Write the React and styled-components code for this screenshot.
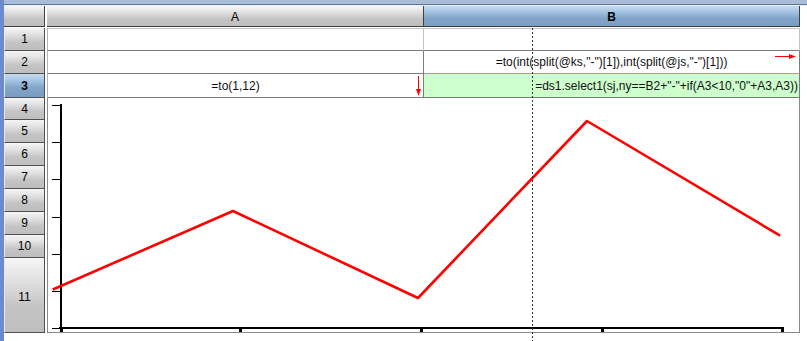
import React from "react";
import styled, { createGlobalStyle, css } from "styled-components";

const Global = createGlobalStyle`
  html, body { margin: 0; padding: 0; background: #ffffff; }
  body { font-family: "Liberation Sans", Arial, sans-serif; font-size: 12px; color: #000; }
`;

const Frame = styled.div`
  position: relative;
  display: flex;
  width: 807px;
  height: 341px;
  overflow: hidden;
  background: #ffffff;
`;

const LeftStrip = styled.div`
  width: 4px;
  flex: none;
  background: #6b8cc8;
`;

const Main = styled.div`
  flex: 1;
  display: flex;
  flex-direction: column;
`;

const TopStrip = styled.div`
  height: 6px;
  flex: none;
  background: linear-gradient(
    to bottom,
    #a9bdd9 0px,
    #a9bdd9 4px,
    #5f7499 4px,
    #5f7499 5px,
    #eef0f4 5px
  );
`;

const Sheet = styled.div`
  display: grid;
  grid-template-columns: 43px 377px 376px;
  grid-template-rows: 22px 23px 23px 24px 22px 23px 23px 23px 23px 23px 23px 75px;
`;

const headerGrey = css`
  background: linear-gradient(to bottom, #f6f6f6 0%, #dedede 35%, #c4c4c4 65%, #bebebe 100%);
`;
const headerBlue = css`
  background: linear-gradient(to bottom, #c4dcf2 0%, #a3c3e2 30%, #81a4c8 60%, #7a9dc2 100%);
`;

const Corner = styled.div`
  ${headerGrey};
  margin: 0 2px 1px 0;
  border-right: 1px solid #404040;
  border-bottom: 1px solid #404040;
  box-sizing: border-box;
`;

const ColHeader = styled.div`
  ${(p) => (p.$selected ? headerBlue : headerGrey)};
  margin-bottom: 1px;
  border-right: 1px solid #404040;
  border-bottom: 1px solid #404040;
  box-sizing: border-box;
  display: flex;
  align-items: center;
  justify-content: center;
  font-weight: ${(p) => (p.$selected ? 700 : 400)};
  padding-top: 1px;
`;

const RowHeader = styled.div`
  ${(p) => (p.$selected ? headerBlue : headerGrey)};
  margin-right: 2px;
  border-bottom: 1px solid #505050;
  border-right: 1px solid #505050;
  border-left: 1px solid #e8e8e8;
  box-sizing: border-box;
  display: flex;
  align-items: center;
  justify-content: center;
  font-weight: ${(p) => (p.$selected ? 700 : 400)};
  padding-top: ${(p) => (p.$tall ? "3px" : "0")};
`;

const Cell = styled.div`
  position: relative;
  box-sizing: border-box;
  background: ${(p) => p.$bg || "#ffffff"};
  border-right: 1px solid ${(p) => (p.$light ? "#c4c4c4" : "#7c7c7c")};
  border-bottom: 1px solid ${(p) => p.$bottom || "#7c7c7c"};
  border-top: ${(p) => (p.$first ? "1px solid #c4c4c4" : "none")};
  border-left: ${(p) => (p.$colA ? "1px solid #b4b4b4" : "none")};
  display: flex;
  align-items: center;
  justify-content: ${(p) => p.$align || "center"};
  white-space: nowrap;
  padding: 0 1px;
`;

const CellText = styled.span`
  color: #111;
`;

const ChartCell = styled.div`
  grid-column: 2 / 4;
  grid-row: 5 / 13;
  box-sizing: border-box;
  border-left: 1px solid #8a8a8a;
  border-right: 1px solid #8a8a8a;
  border-bottom: 1px solid #8a8a8a;
  background: #ffffff;
  display: flex;
`;

const Marker = styled.svg`
  position: absolute;
  ${(p) => p.$pos};
`;

const PageBreak = styled.div`
  position: absolute;
  left: 532px;
  top: 28px;
  bottom: 0;
  width: 1px;
  background: repeating-linear-gradient(to bottom, #333 0px, #333 2px, transparent 2px, transparent 4px);
  pointer-events: none;
`;

const rows = ["4", "5", "6", "7", "8", "9", "10", "11"];

const points = [
  [6, 191],
  [185, 113],
  [370, 200],
  [539, 23],
  [731, 137],
];

const yTicks = [7, 44.2, 81.3, 118.5, 155.7, 192.8, 230];
const xTicks = [13, 192, 373, 554, 734];

function Chart() {
  return (
    <svg width="750" height="234" viewBox="0 0 750 234">
      <g shapeRendering="crispEdges" stroke="#000" fill="none">
        <line x1="12.5" y1="6" x2="12.5" y2="231" strokeWidth="2" />
        <line x1="11" y1="230" x2="736" y2="230" strokeWidth="2" />
        {yTicks.map((y) => (
          <line key={y} x1="4" y1={Math.round(y) + 0.5} x2="12" y2={Math.round(y) + 0.5} strokeWidth="1.5" />
        ))}
      </g>
      <g fill="#000" shapeRendering="crispEdges">
        {xTicks.map((x) => (
          <rect key={x} x={x - 1} y="231" width="3" height="3" />
        ))}
      </g>
      <polyline
        points={points.map((p) => p.join(",")).join(" ")}
        fill="none"
        stroke="#ff0000"
        strokeWidth="2.6"
        strokeLinejoin="round"
        strokeLinecap="square"
      />
    </svg>
  );
}

export default function App() {
  return (
    <>
      <Global />
      <Frame>
        <LeftStrip />
        <Main>
          <TopStrip />
          <Sheet>
            <Corner />
            <ColHeader>A</ColHeader>
            <ColHeader $selected>B</ColHeader>

            <RowHeader>1</RowHeader>
            <Cell $first $colA $light />
            <Cell $first $light />

            <RowHeader>2</RowHeader>
            <Cell $colA />
            <Cell $bottom="#b58cc8">
              <CellText>=to(int(split(@ks,"-")[1]),int(split(@js,"-")[1]))</CellText>
              <Marker width="22" height="7" viewBox="0 0 22 7" $pos="right: 2px; top: 2px;">
                <line x1="0" y1="3.5" x2="16" y2="3.5" stroke="#ff0000" strokeWidth="1" shapeRendering="crispEdges" />
                <polygon points="14,1 21,3.5 14,6" fill="#ff0000" />
              </Marker>
            </Cell>

            <RowHeader $selected>3</RowHeader>
            <Cell $colA>
              <CellText>=to(1,12)</CellText>
              <Marker width="7" height="21" viewBox="0 0 7 21" $pos="right: 1px; top: 2px;">
                <line x1="3.5" y1="0" x2="3.5" y2="15" stroke="#ff0000" strokeWidth="1" shapeRendering="crispEdges" />
                <polygon points="1,13 3.5,20 6,13" fill="#ff0000" />
              </Marker>
            </Cell>
            <Cell $bg="#ccffcc" $align="flex-end">
              <CellText>=ds1.select1(sj,ny==B2+"-"+if(A3&lt;10,"0"+A3,A3))</CellText>
            </Cell>

            {rows.map((r) => (
              <RowHeader key={r} $tall={r === "11"} style={{ gridColumn: 1 }}>
                {r}
              </RowHeader>
            ))}
            <ChartCell>
              <Chart />
            </ChartCell>
          </Sheet>
        </Main>
        <PageBreak />
      </Frame>
    </>
  );
}
